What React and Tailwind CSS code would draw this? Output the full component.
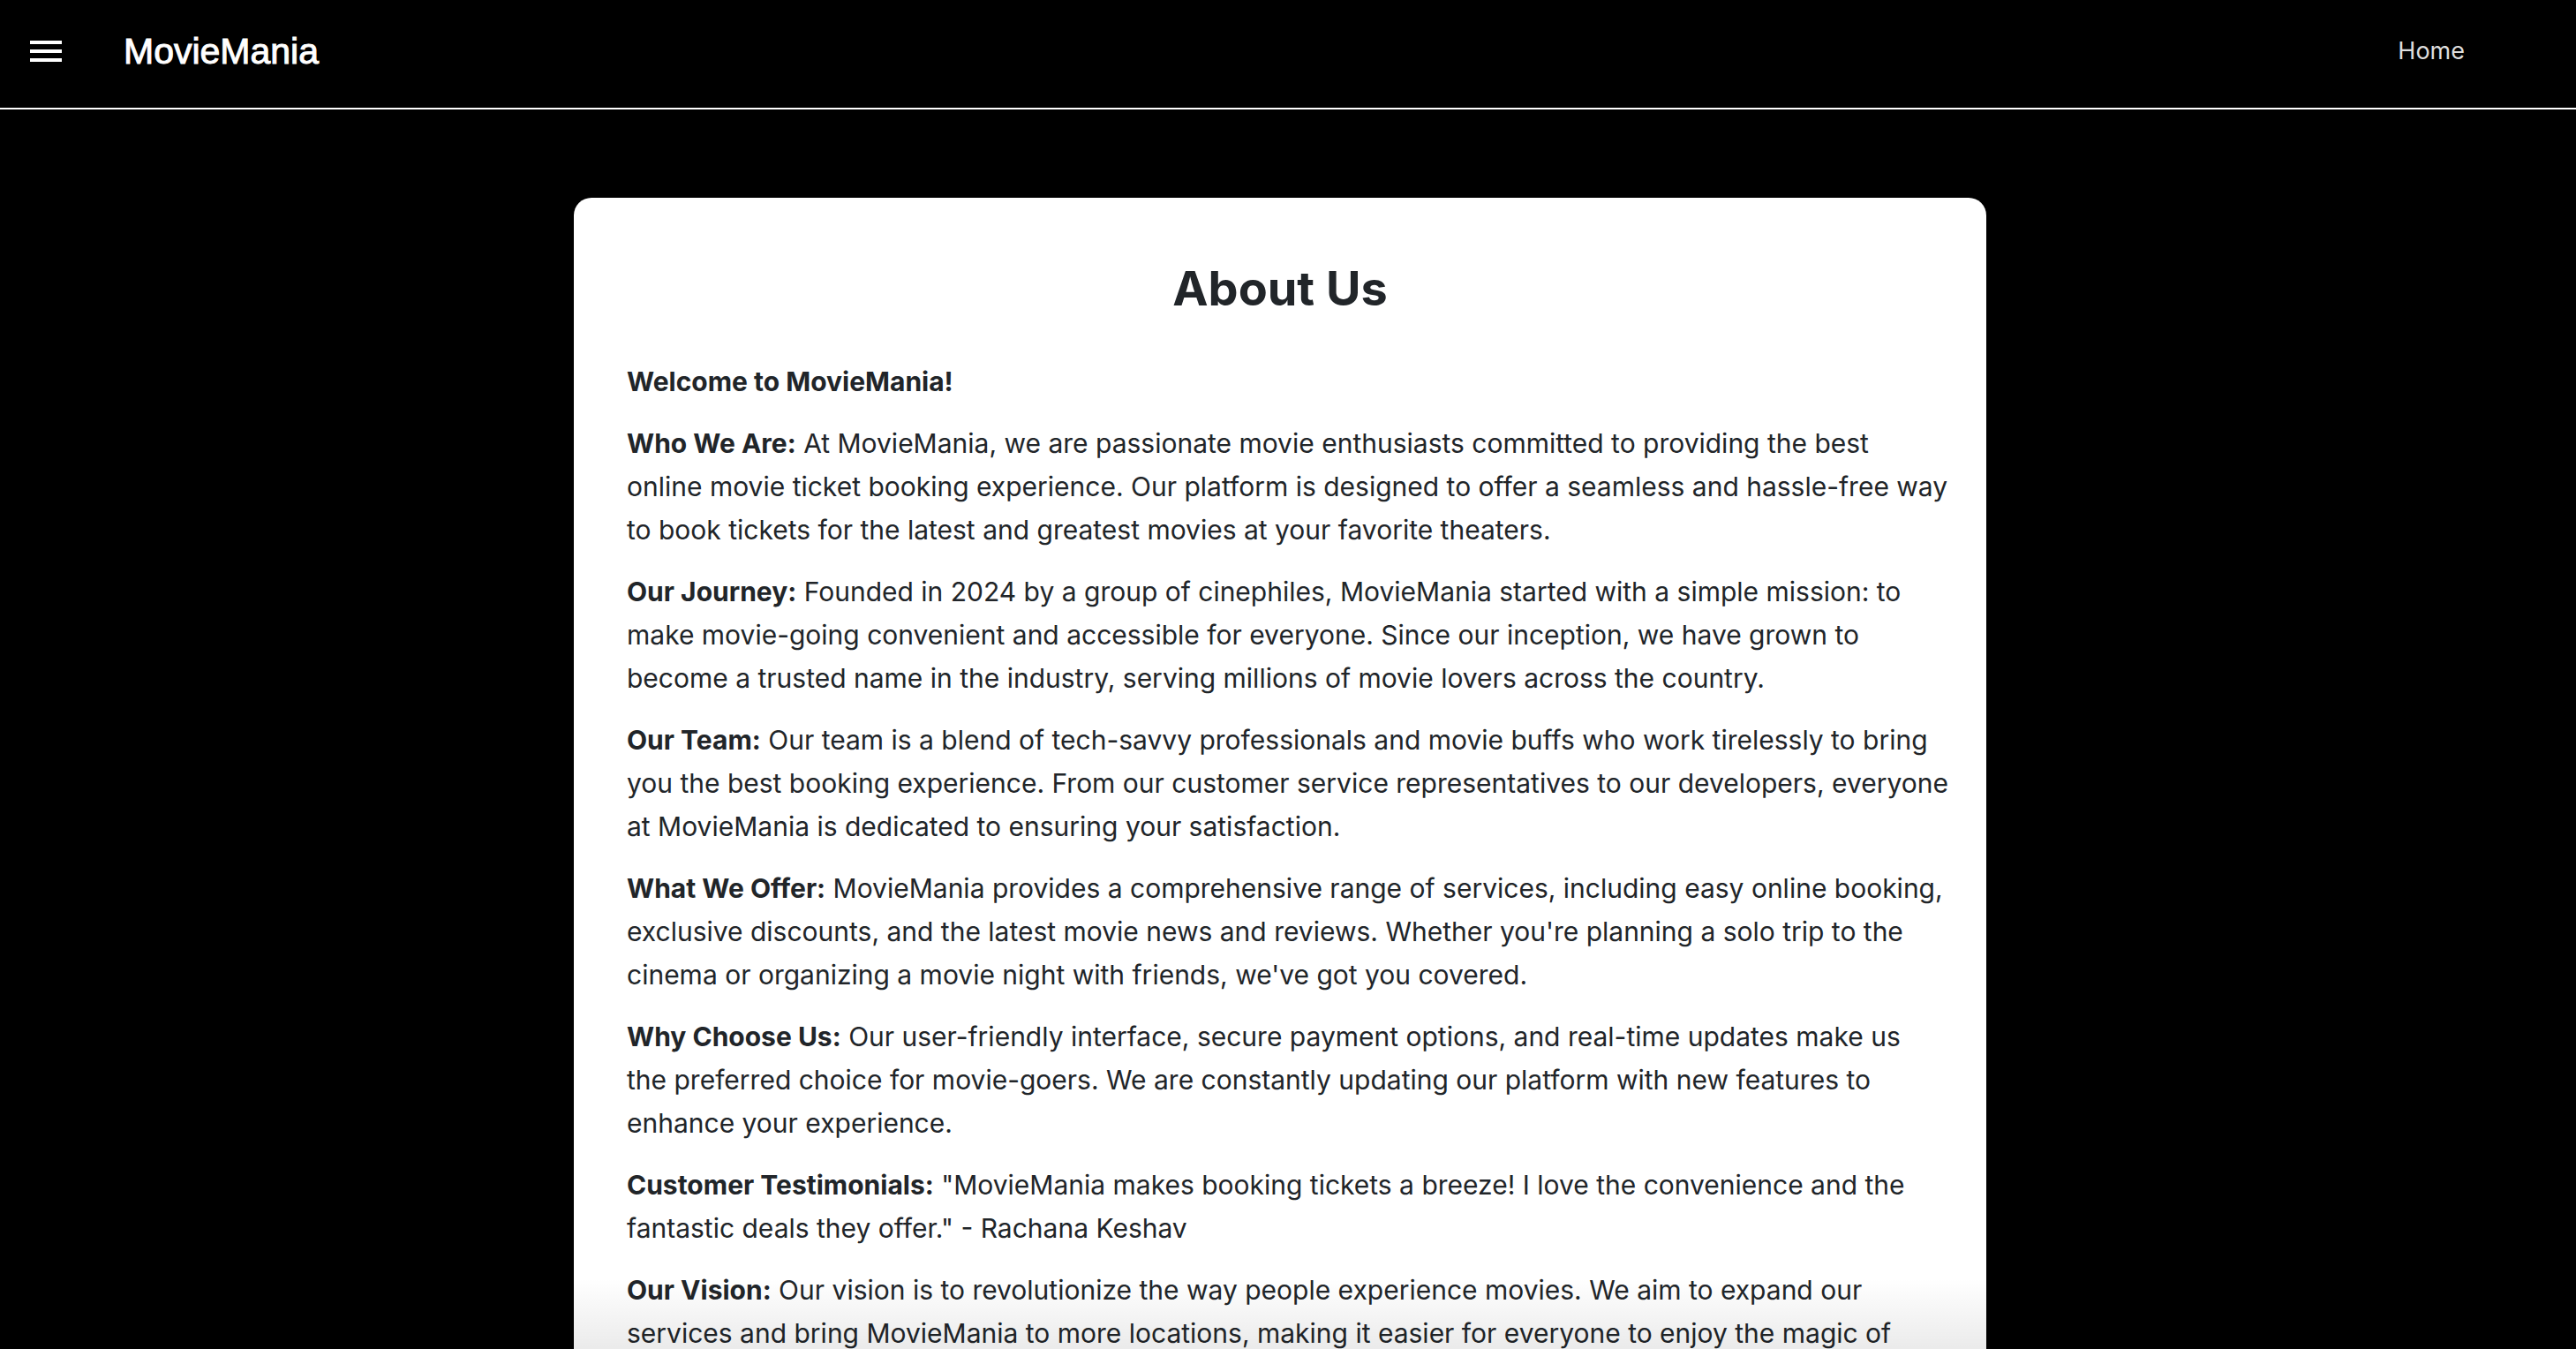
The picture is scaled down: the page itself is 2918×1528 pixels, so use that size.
const sections = [
  { title: "Welcome to MovieMania!", body: "" },
  {
    title: "Who We Are:",
    body: "At MovieMania, we are passionate movie enthusiasts committed to providing the best online movie ticket booking experience. Our platform is designed to offer a seamless and hassle-free way to book tickets for the latest and greatest movies at your favorite theaters.",
  },
  {
    title: "Our Journey:",
    body: "Founded in 2024 by a group of cinephiles, MovieMania started with a simple mission: to make movie-going convenient and accessible for everyone. Since our inception, we have grown to become a trusted name in the industry, serving millions of movie lovers across the country.",
  },
  {
    title: "Our Team:",
    body: "Our team is a blend of tech-savvy professionals and movie buffs who work tirelessly to bring you the best booking experience. From our customer service representatives to our developers, everyone at MovieMania is dedicated to ensuring your satisfaction.",
  },
  {
    title: "What We Offer:",
    body: "MovieMania provides a comprehensive range of services, including easy online booking, exclusive discounts, and the latest movie news and reviews. Whether you're planning a solo trip to the cinema or organizing a movie night with friends, we've got you covered.",
  },
  {
    title: "Why Choose Us:",
    body: "Our user-friendly interface, secure payment options, and real-time updates make us the\u00a0preferred choice for movie-goers. We are constantly updating our platform with new features to enhance your experience.",
  },
  {
    title: "Customer Testimonials:",
    body: '"MovieMania makes booking tickets a breeze! I love the convenience and the fantastic deals they offer." - Rachana Keshav',
  },
  {
    title: "Our Vision:",
    body: "Our vision is to revolutionize the way people experience movies. We aim to expand our services and bring MovieMania to more locations, making it easier for everyone to enjoy the magic of",
  },
];

function MenuIcon() {
  return (
    <svg viewBox="0 0 24 24" className="size-12" fill="currentColor" aria-hidden="true">
      <path d="M3 18h18v-2H3v2zm0-5h18v-2H3v2zm0-7v2h18V6H3z" />
    </svg>
  );
}

function Header() {
  return (
    <header className="flex h-[124px] shrink-0 items-center border-b-2 border-white bg-black pr-[126px] pb-[6px] pl-7 text-white">
      <button type="button" aria-label="Open menu" className="mr-16">
        <MenuIcon />
      </button>
      <span className="font-['Liberation_Sans',sans-serif] text-[41px] leading-12 [-webkit-text-stroke:1px_white]">
        MovieMania
      </span>
      <nav className="ml-auto">
        <a href="#home" className="font-['Inter',sans-serif] text-[27px] leading-10 text-[#dedede]">
          Home
        </a>
      </nav>
    </header>
  );
}

export default function App() {
  return (
    <div className="relative flex h-screen flex-col overflow-hidden bg-black">
      <Header />
      <main className="min-h-0 flex-1 overflow-hidden pt-[100px] pr-[18px]">
        <article className="mx-auto max-w-[1600px] rounded-[20px] bg-white px-15 pt-[71px] pb-15 text-[#212529] font-['Inter',sans-serif]">
          <h1 className="mb-[49px] text-center text-[54px] leading-16 font-bold">About Us</h1>
          <div className="-mr-5 flex flex-col gap-[21px] text-[30px] leading-[49px]">
            {sections.map((s) => (
              <p key={s.title}>
                <strong className="font-bold">{s.title}</strong> {s.body}
              </p>
            ))}
          </div>
        </article>
      </main>
      <div className="pointer-events-none absolute inset-x-0 bottom-0 h-20 bg-linear-to-b from-transparent to-black/8" />
    </div>
  );
}
